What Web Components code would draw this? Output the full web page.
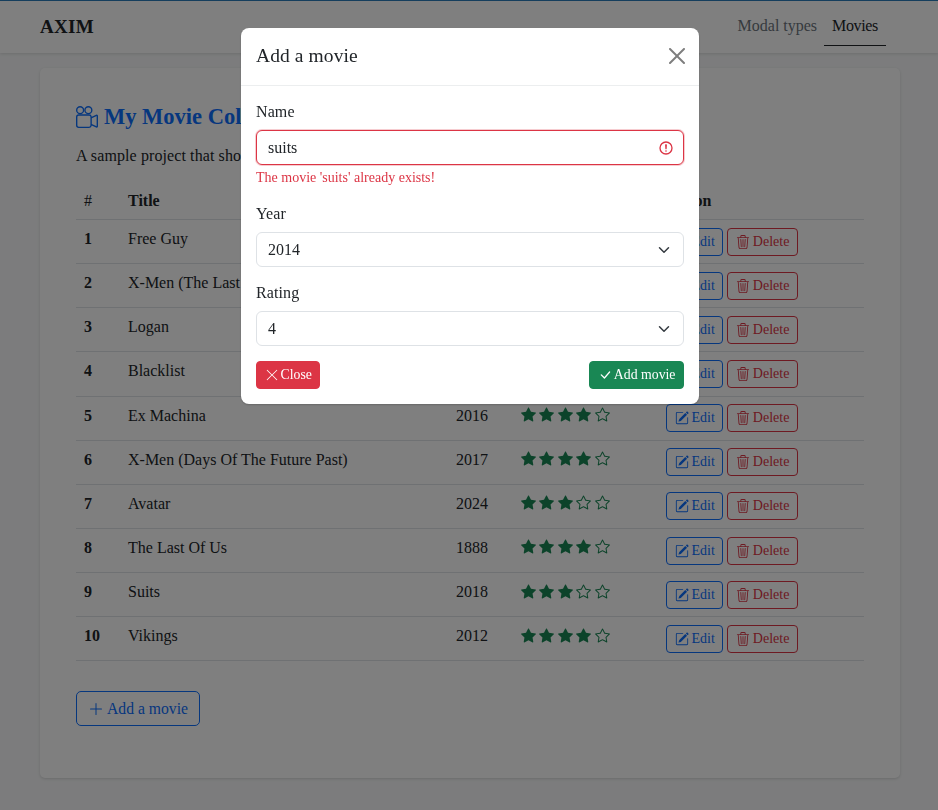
<!DOCTYPE html>
<html lang="en">
<head>
<meta charset="utf-8">
<title>AXIM</title>
<style>
  html, body { margin: 0; padding: 0; }
  body {
    background: #f8f9fa; color: #212529;
    font: 16px/24px "Liberation Serif", "Times New Roman", serif;
  }
</style>
</head>
<body>
<app-nav brand="AXIM">
  <nav-link>Modal types</nav-link>
  <nav-link active>Movies</nav-link>
</app-nav>

<movie-card>
  <span slot="title">My Movie Collection</span>
  <span slot="lead">A sample project that shows modals</span>
  <movie-table></movie-table>
  <action-btn slot="footer" kind="outline-primary" icon="plus" size="lg">Add a movie</action-btn>
</movie-card>

<modal-dialog heading="Add a movie">
  <form-field label="Name" value="suits" error="The movie 'suits' already exists!"></form-field>
  <form-field label="Year" value="2014" select></form-field>
  <form-field label="Rating" value="4" select></form-field>
  <action-btn slot="footer" kind="danger" icon="x">Close</action-btn>
  <action-btn slot="footer" kind="success" icon="check">Add movie</action-btn>
</modal-dialog>

<script>
const ICONS = {
  reels: '<path d="M6 3a3 3 0 1 1-6 0 3 3 0 0 1 6 0M1 3a2 2 0 1 0 4 0 2 2 0 0 0-4 0"/><path d="M9 6h.5a2 2 0 0 1 1.983 1.738l3.11-1.382A1 1 0 0 1 16 7.269v7.462a1 1 0 0 1-1.406.913l-3.111-1.382A2 2 0 0 1 9.5 16H2a2 2 0 0 1-2-2V8a2 2 0 0 1 2-2zm6 8.73V7.27l-3.5 1.555v4.35zM1 8v6a1 1 0 0 0 1 1h7.5a1 1 0 0 0 1-1V8a1 1 0 0 0-1-1H2a1 1 0 0 0-1 1"/><path d="M9 6a3 3 0 1 0 0-6 3 3 0 0 0 0 6M7 3a2 2 0 1 1 4 0 2 2 0 0 1-4 0"/>',
  edit: '<path d="M15.502 1.94a.5.5 0 0 1 0 .706L14.459 3.69l-2-2L13.502.646a.5.5 0 0 1 .707 0l1.293 1.293zm-1.75 2.456-2-2L4.939 9.21a.5.5 0 0 0-.121.196l-.805 2.414a.25.25 0 0 0 .316.316l2.414-.805a.5.5 0 0 0 .196-.12l6.813-6.814z"/><path fill-rule="evenodd" d="M1 13.5A1.5 1.5 0 0 0 2.5 15h11a1.5 1.5 0 0 0 1.5-1.5v-6a.5.5 0 0 0-1 0v6a.5.5 0 0 1-.5.5h-11a.5.5 0 0 1-.5-.5v-11a.5.5 0 0 1 .5-.5H9a.5.5 0 0 0 0-1H2.5A1.5 1.5 0 0 0 1 2.5z"/>',
  trash: '<path d="M6.5 1h3a.5.5 0 0 1 .5.5v1H6v-1a.5.5 0 0 1 .5-.5M11 2.5v-1A1.5 1.5 0 0 0 9.5 0h-3A1.5 1.5 0 0 0 5 1.5v1H1.5a.5.5 0 0 0 0 1h.538l.853 10.66A2 2 0 0 0 4.885 16h6.23a2 2 0 0 0 1.994-1.84l.853-10.66h.538a.5.5 0 0 0 0-1zm1.958 1-.846 10.58a1 1 0 0 1-.997.92h-6.23a1 1 0 0 1-.997-.92L3.042 3.5zm-7.487 1a.5.5 0 0 1 .528.47l.5 8.5a.5.5 0 0 1-.998.06L5 5.03a.5.5 0 0 1 .47-.53Zm5.058 0a.5.5 0 0 1 .47.53l-.5 8.5a.5.5 0 1 1-.998-.06l.5-8.5a.5.5 0 0 1 .528-.47M8 4.5a.5.5 0 0 1 .5.5v8.5a.5.5 0 0 1-1 0V5a.5.5 0 0 1 .5-.5"/>',
  x: '<path d="M2.146 2.854a.5.5 0 1 1 .708-.708L8 7.293l5.146-5.147a.5.5 0 0 1 .708.708L8.707 8l5.147 5.146a.5.5 0 0 1-.708.708L8 8.707l-5.146 5.147a.5.5 0 0 1-.708-.708L7.293 8z"/>',
  close: '<path d="M.293.293a1 1 0 0 1 1.414 0L8 6.586 14.293.293a1 1 0 1 1 1.414 1.414L9.414 8l6.293 6.293a1 1 0 0 1-1.414 1.414L8 9.414l-6.293 6.293a1 1 0 0 1-1.414-1.414L6.586 8 .293 1.707a1 1 0 0 1 0-1.414z"/>',
  check: '<path d="M12.736 3.97a.733.733 0 0 1 1.047 0c.286.289.29.756.01 1.05L7.88 12.01a.733.733 0 0 1-1.065.02L3.217 8.384a.757.757 0 0 1 0-1.06.733.733 0 0 1 1.047 0l3.052 3.093 5.42-6.447z"/>',
  plus: '<path d="M8 2a.5.5 0 0 1 .5.5v5h5a.5.5 0 0 1 0 1h-5v5a.5.5 0 0 1-1 0v-5h-5a.5.5 0 0 1 0-1h5v-5A.5.5 0 0 1 8 2"/>',
  star: '<path d="M3.612 15.443c-.386.198-.824-.149-.746-.592l.83-4.73L.173 6.765c-.329-.314-.158-.888.283-.95l4.898-.696L7.538.792c.197-.39.73-.39.927 0l2.184 4.327 4.898.696c.441.062.612.636.282.95l-3.522 3.356.83 4.73c.078.443-.36.79-.746.592L8 13.187l-4.389 2.256z"/>',
  starEmpty: '<path d="M2.866 14.85c-.078.444.36.791.746.593l4.39-2.256 4.389 2.256c.386.198.824-.149.746-.592l-.83-4.73 3.522-3.356c.33-.314.16-.888-.282-.95l-4.898-.696L8.465.792a.513.513 0 0 0-.927 0L5.354 5.12l-4.898.696c-.441.062-.612.636-.283.95l3.523 3.356-.83 4.73zm4.905-2.767-3.686 1.894.694-3.957a.56.56 0 0 0-.163-.505L1.71 6.745l4.052-.576a.53.53 0 0 0 .393-.288L8 2.223l1.847 3.658a.53.53 0 0 0 .393.288l4.052.575-2.906 2.77a.56.56 0 0 0-.163.506l.694 3.957-3.686-1.894a.5.5 0 0 0-.461 0z"/>'
};

const svg = (name, size = 16) =>
  `<svg width="${size}" height="${size}" viewBox="0 0 16 16" fill="currentColor" aria-hidden="true">${ICONS[name]}</svg>`;

class AppNav extends HTMLElement {
  connectedCallback() {
    this.attachShadow({ mode: 'open' }).innerHTML = `
      <style>
        :host {
          display: flex; align-items: center; justify-content: space-between;
          height: 52px; padding: 0 52px 0 40px; background: #fff;
          border-top: 1px solid #2a7dbb;
          box-shadow: 0 1px 3px rgba(0,0,0,.12);
        }
        .brand { font-size: 19px; font-weight: 700; letter-spacing: .3px; color: #212529; }
        .links { display: flex; align-self: stretch; align-items: stretch; }
      </style>
      <div class="brand">${this.getAttribute('brand')}</div>
      <div class="links"><slot></slot></div>`;
  }
}

class NavLink extends HTMLElement {
  connectedCallback() {
    this.attachShadow({ mode: 'open' }).innerHTML = `
      <style>
        :host {
          display: flex; align-items: center; padding: 6px 7px 0 8px;
          margin-bottom: 7px; color: #6c757d;
          border-bottom: 1px solid transparent;
        }
        :host([active]) {
          padding-right: 8px; letter-spacing: -.35px;
          color: #212529; border-bottom-color: #212529;
        }
      </style>
      <slot></slot>`;
  }
}

class MovieCard extends HTMLElement {
  connectedCallback() {
    this.attachShadow({ mode: 'open' }).innerHTML = `
      <style>
        :host {
          display: block; margin: 15px 38px 32px 40px; height: 710px; box-sizing: border-box;
          padding: 36px; background: #fff; border-radius: 5px;
          box-shadow: 0 1px 3px rgba(0,0,0,.14);
        }
        h1 {
          display: flex; align-items: center; gap: 6px; margin: 0 0 14px;
          font-size: 22.5px; line-height: 26px; font-weight: 700; color: #0d6efd;
        }
        p { margin: 0 0 13px; letter-spacing: .1px; }
        .footer { display: flex; margin-top: 30px; }
      </style>
      <h1>${svg('reels', 22)}<slot name="title"></slot></h1>
      <p><slot name="lead"></slot></p>
      <slot></slot>
      <div class="footer"><slot name="footer"></slot></div>`;
  }
}

const MOVIES = [
  ['Free Guy', 2021, 4], ['X-Men (The Last Stand)', 2006, 3], ['Logan', 2017, 4], ['Blacklist', 2013, 4],
  ['Ex Machina', 2016, 4], ['X-Men (Days Of The Future Past)', 2017, 4], ['Avatar', 2024, 3],
  ['The Last Of Us', 1888, 4], ['Suits', 2018, 3], ['Vikings', 2012, 4]
];

class MovieTable extends HTMLElement {
  connectedCallback() {
    const rows = MOVIES.map(([title, year, rating], i) => `
      <tr>
        <th>${i + 1}</th><td>${title}</td><td>${year}</td>
        <td class="stars"><star-rating value="${rating}"></star-rating></td>
        <td class="act"><div>
          <action-btn kind="outline-primary" icon="edit">Edit</action-btn>
          <action-btn kind="outline-danger" icon="trash">Delete</action-btn>
        </div></td>
      </tr>`).join('');
    this.attachShadow({ mode: 'open' }).innerHTML = `
      <style>
        :host { display: block; }
        table { width: 100%; border-collapse: collapse; table-layout: fixed; }
        th, td {
          padding: 7px 8px 7px; text-align: left; vertical-align: top;
          border-bottom: 1px solid #dee2e6; height: 29.14px;
        }
        thead th { height: 24px; padding: 8px 8px 6px; }
        thead th:first-child { font-weight: 400; }
        .stars { padding-top: 10.5px; padding-bottom: 3.5px; }
        .act { padding-top: 7.7px; padding-bottom: 6.3px; }
        .act div { display: flex; gap: 4px; }
      </style>
      <table>
        <colgroup><col style="width:44px"><col style="width:328px"><col style="width:64px"><col style="width:146px"><col></colgroup>
        <thead><tr><th>#</th><th>Title</th><th>Year</th><th>Rating</th><th>Action</th></tr></thead>
        <tbody>${rows}</tbody>
      </table>`;
  }
}

class StarRating extends HTMLElement {
  connectedCallback() {
    const value = Number(this.getAttribute('value'));
    let stars = '';
    for (let i = 1; i <= 5; i++) stars += svg(i <= value ? 'star' : 'starEmpty', 15);
    this.attachShadow({ mode: 'open' }).innerHTML = `
      <style>
        :host { display: flex; gap: 3.4px; padding-left: 1px; color: #198754; }
      </style>${stars}`;
  }
}

class ActionBtn extends HTMLElement {
  connectedCallback() {
    const icon = this.getAttribute('icon');
    this.attachShadow({ mode: 'open' }).innerHTML = `
      <style>
        :host {
          display: inline-flex; align-items: center; gap: 2.5px; box-sizing: border-box;
          height: 28px; padding: 0 7.5px 0 8px; border: 1px solid; border-radius: 4px;
          font-size: 14px; line-height: 20px; white-space: nowrap;
        }
        :host([kind="outline-primary"]) { color: #0d6efd; border-color: #0d6efd; }
        :host([kind="outline-danger"]) { color: #dc3545; border-color: #dc3545; }
        :host([kind="danger"]), :host([kind="success"]) { color: #fff; gap: 1.5px; font-size: 13.8px; }
        :host([kind="danger"]) { background: #dc3545; border-color: #dc3545; }
        :host([kind="success"]) { background: #198754; border-color: #198754; }
        :host([size="lg"]) { height: 35px; padding: 0 11px; gap: 3px; font-size: 15.7px; border-radius: 5px; }
        svg { flex: none; }
      </style>
      ${svg(icon, this.getAttribute('size') === 'lg' ? 16 : 14)}<slot></slot>`;
  }
}

class FormField extends HTMLElement {
  connectedCallback() {
    const error = this.getAttribute('error');
    const isSelect = this.hasAttribute('select');
    const trailing = isSelect
      ? `<svg class="chev" width="16" height="12" viewBox="0 0 16 16"><path fill="none" stroke="#343a40" stroke-linecap="round" stroke-linejoin="round" stroke-width="2" d="m2 5 6 6 6-6"/></svg>`
      : error
        ? `<svg width="16" height="16" viewBox="0 0 12 12" fill="none" stroke="#dc3545"><circle cx="6" cy="6" r="4.5"/><path stroke-linejoin="round" d="M5.8 3.6h.4L6 6.5z"/><circle cx="6" cy="8.2" r=".6" fill="#dc3545" stroke="none"/></svg>`
        : '';
    this.attachShadow({ mode: 'open' }).innerHTML = `
      <style>
        :host { display: block; margin-bottom: 13px; }
        :host([error]) { margin-bottom: 14px; }
        label { display: block; height: 24px; line-height: 26px; margin-bottom: 7px; letter-spacing: .1px; color: #212529; }
        .control {
          display: flex; align-items: center; justify-content: space-between; box-sizing: border-box;
          height: 35px; padding: 0 11px 0 11px; background: #fff;
          border: 1px solid #dee2e6; border-radius: 6px; color: #212529;
        }
        :host([error]) .control {
          border-color: #dc3545; padding-right: 9px;
          box-shadow: 0 0 0 1px rgba(220,53,69,.25);
        }
        .error { margin-top: 4px; font-size: 14px; line-height: 18px; color: #dc3545; }
      </style>
      <label>${this.getAttribute('label')}</label>
      <div class="control"><span>${this.getAttribute('value')}</span>${trailing}</div>
      ${error ? `<div class="error">${error}</div>` : ''}`;
  }
}

class ModalDialog extends HTMLElement {
  connectedCallback() {
    this.attachShadow({ mode: 'open' }).innerHTML = `
      <style>
        :host {
          position: fixed; inset: 0; display: flex; justify-content: center; align-items: flex-start;
          padding: 28px 0 0 2px; box-sizing: border-box; background: rgba(0,0,0,.5);
        }
        .dialog {
          width: 458px; background: #fff; border-radius: 8px; color: #212529;
          box-shadow: 0 1px 2px rgba(0,0,0,.2);
        }
        header {
          display: flex; align-items: center; justify-content: space-between; box-sizing: border-box;
          height: 58px; padding: 0 14px 2px 15px; border-bottom: 1px solid #eceeef;
        }
        h2 { margin: 0; font-size: 19.5px; line-height: 28px; font-weight: 400; letter-spacing: .1px; }
        .close { color: #000; opacity: .5; display: flex; }
        .body { padding: 13px 15px 15px; }
        .footer { display: flex; justify-content: space-between; margin-top: 15px; }
      </style>
      <div class="dialog">
        <header><h2>${this.getAttribute('heading')}</h2><span class="close">${svg('close', 16)}</span></header>
        <div class="body">
          <slot></slot>
          <div class="footer"><slot name="footer"></slot></div>
        </div>
      </div>`;
  }
}

customElements.define('app-nav', AppNav);
customElements.define('nav-link', NavLink);
customElements.define('movie-card', MovieCard);
customElements.define('movie-table', MovieTable);
customElements.define('star-rating', StarRating);
customElements.define('action-btn', ActionBtn);
customElements.define('form-field', FormField);
customElements.define('modal-dialog', ModalDialog);
</script>
</body>
</html>
